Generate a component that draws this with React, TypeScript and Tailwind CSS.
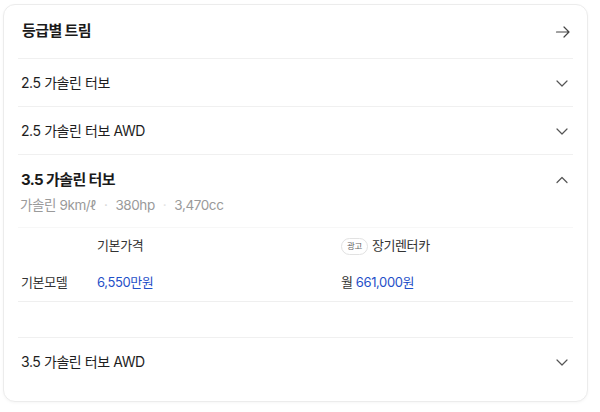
import React from "react";

const font = { fontFamily: 'Inter, "Noto Sans CJK KR", "Noto Sans", sans-serif' };

function ChevronDown() {
  return (
    <svg width="14" height="14" viewBox="0 0 14 14" fill="none">
      <path d="M2 5 L7 10 L12 5" stroke="#555" strokeWidth="1.2" strokeLinecap="round" strokeLinejoin="round" />
    </svg>
  );
}
function ChevronUp() {
  return (
    <svg width="14" height="14" viewBox="0 0 14 14" fill="none">
      <path d="M2 9.5 L7 4.5 L12 9.5" stroke="#555" strokeWidth="1.2" strokeLinecap="round" strokeLinejoin="round" />
    </svg>
  );
}
function ArrowRight() {
  return (
    <svg width="16" height="16" viewBox="0 0 16 16" fill="none">
      <path d="M1.5 8 H14 M9 3 L14 8 L9 13" stroke="#444" strokeWidth="1.2" strokeLinecap="round" strokeLinejoin="round" />
    </svg>
  );
}

function Row({ label }: { label: string }) {
  return (
    <div className="flex h-[48px] items-center justify-between border-t border-[#f0f0f0] pl-[3px] pr-[4px]">
      <span className="text-[14px] tracking-[-0.03em] text-[#1e1e1e]">{label}</span>
      <ChevronDown />
    </div>
  );
}

export default function App() {
  return (
    <div className="h-[412px] w-[600px] bg-white pl-[3px] pt-[4px]" style={font}>
      <div className="h-[398px] w-[585px] rounded-[12px] border border-[#ececec] bg-white px-[14px] shadow-[0_1px_3px_rgba(0,0,0,0.04)]">
        <div className="flex h-[53px] items-center justify-between pl-[4px] pr-[2px]">
          <span className="text-[15px] font-bold tracking-[-0.04em] text-[#1a1a1a]">등급별 트림</span>
          <ArrowRight />
        </div>
        <Row label="2.5 가솔린 터보" />
        <Row label="2.5 가솔린 터보 AWD" />
        <div className="border-t border-[#f0f0f0]">
          <div className="flex h-[36px] items-end justify-between pl-[3px] pr-[4px]">
            <span className="text-[15px] font-bold leading-[22px] tracking-[-0.04em] text-[#1a1a1a]">3.5 가솔린 터보</span>
            <span className="mb-[4px]"><ChevronUp /></span>
          </div>
          <div className="flex h-[28px] items-center gap-[8px] pl-[2px] text-[13.5px] tracking-[-0.03em] text-[#9a9a9a]">
            <span>가솔린 9km/ℓ</span>
            <span className="text-[#d8d8d8]">·</span>
            <span>380hp</span>
            <span className="text-[#e4e4e4]">·</span>
            <span>3,470cc</span>
          </div>
          <div className="mt-[8px] border-t border-[#f7f7f7]">
            <div className="flex h-[36px] items-center text-[13px] tracking-[-0.03em] text-[#333]">
              <div className="w-[79px]" />
              <div className="w-[244px]">기본가격</div>
              <div className="flex items-center gap-[4px]">
                <span className="rounded-full border border-[#e2e2e2] px-[5px] text-[8.5px] leading-[15px] text-[#666]">광고</span>
                <span>장기렌터카</span>
              </div>
            </div>
            <div className="flex h-[38px] items-center border-b border-[#efefef] text-[13px] tracking-[-0.03em]">
              <div className="w-[79px] pl-[3px] text-[#333]">기본모델</div>
              <div className="w-[244px] text-[#1f50c8]">6,550만원</div>
              <div className="text-[#333]">
                월 <span className="text-[#1f50c8]">661,000원</span>
              </div>
            </div>
          </div>
          <div className="h-[35px]" />
        </div>
        <Row label="3.5 가솔린 터보 AWD" />
      </div>
    </div>
  );
}
